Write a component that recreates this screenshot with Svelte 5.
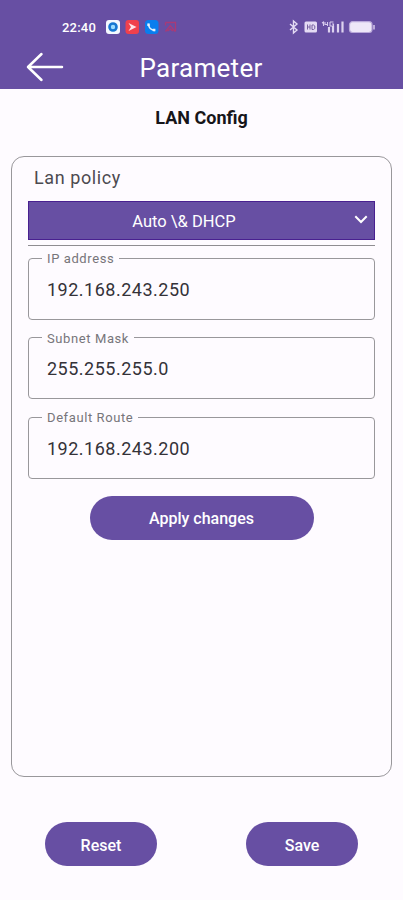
<script>
  let policy = $state('Auto \\& DHCP');
  let fields = $state([
    { label: 'IP address', value: '192.168.243.250' },
    { label: 'Subnet Mask', value: '255.255.255.0' },
    { label: 'Default Route', value: '192.168.243.200' },
  ]);
</script>

<div class="screen">
  <header>
    <div class="status">
      <span class="time">22:40</span>
      <svg class="apps" width="74" height="16" viewBox="0 0 74 16">
        <rect x="1" y="1" width="14" height="14" rx="3" fill="#f4f8ff" />
        <circle cx="8" cy="8" r="3.5" fill="#9bdcff" stroke="#1676d2" stroke-width="2.6" />
        <rect x="20.5" y="1" width="13.5" height="14" rx="3" fill="#f0404c" />
        <path d="M23.5 4l8 4-8 4 2.5-4z" fill="#ffe3e8" />
        <rect x="40" y="1" width="13.5" height="14" rx="3.5" fill="#087eee" />
        <path d="M43.6 4.8c-.1 3.6 2.5 6.4 6.3 6.6" fill="none" stroke="#e4f3ff" stroke-width="1.5" />
        <path d="M43.5 4.5v2.4M47.8 11h2.6" stroke="#e4f3ff" stroke-width="2.4" />
        <path d="M60.5 3.500h10v9M60.500 12.500l4.700-6 5 6M60.500 3.500v3M62.500 12l2.700-2 2.700 2" fill="none" stroke="#a93a76" stroke-width="1.3" />
      </svg>
      <svg class="system" width="88" height="16" viewBox="0 0 88 16">
        <path d="M2 5l7 6-3.5 3V2L9 5l-7 6" fill="none" stroke="#e4dbf4" stroke-width="1.4" />
        <rect x="16.5" y="2.5" width="12.5" height="11" rx="1.5" fill="#e4dbf4" />
        <path d="M19.5 5.5v5M19.5 8H22M22 5.5v5M24 6h1.5l1.3 1v2.5l-1.3 1H24z" fill="none" stroke="#76619f" />
        <path d="M34 4l1.5-1v4M37 3v2.5h3M39.5 3v4M42 3h3.5M42 3v4h3.5V5H44" fill="none" stroke="#d7caed" stroke-width="1.1" />
        <path d="M41 8v5.5M45 7v6.5M50 5v8.5M54.5 2.5v11" stroke="#ddd2ef" stroke-width="2.2" />
        <rect x="61.5" y="2.7" width="22.5" height="10.8" rx="3" fill="#eee7f8" stroke="#b9a8d9" stroke-width="1.2" />
        <path d="M86 6v4.5" stroke="#d7caed" stroke-width="1.5" />
      </svg>
    </div>
    <div class="toolbar">
      <button class="back" type="button" aria-label="Back">
        <svg width="38" height="30" viewBox="0 0 38 30">
          <path d="M36 15H2M15.5 2L2 15l13.5 13" fill="none" stroke="#fff" stroke-width="2.5" stroke-linecap="round" stroke-linejoin="round" />
        </svg>
      </button>
      <h1>Parameter</h1>
    </div>
  </header>

  <h2>LAN Config</h2>

  <main>
    <p>Lan policy</p>
    <button class="select" type="button">
      <span>{policy}</span>
      <svg width="14" height="9" viewBox="0 0 14 9">
        <path d="M1.3 1.3L7 7l5.7-5.7" fill="none" stroke="#fff" stroke-width="2" />
      </svg>
    </button>
    <hr />
    {#each fields as field (field.label)}
      <fieldset>
        <legend>{field.label}</legend>
        <input aria-label={field.label} bind:value={field.value} />
      </fieldset>
    {/each}
    <button class="pill apply" type="button">Apply changes</button>
  </main>

  <footer>
    <button class="pill" type="button">Reset</button>
    <button class="pill" type="button">Save</button>
  </footer>
</div>

<style>
  :global(body) {
    margin: 0;
    background: #fefbff;
  }
  .screen {
    box-sizing: border-box;
    display: flex;
    flex-direction: column;
    width: 403px;
    height: 900px;
    background: #fefbff;
    font-family: Roboto, sans-serif;
  }
  button {
    border: none;
    padding: 0;
    font: inherit;
    color: #fff;
    cursor: pointer;
  }
  header {
    height: 88.5px;
    flex: none;
    background: #674fa3;
    color: #fff;
  }
  .status {
    display: flex;
    align-items: center;
    height: 16px;
    padding: 19px 27px 0 62px;
  }
  .time {
    width: 43px;
    font-size: 13px;
    font-weight: 500;
    letter-spacing: 0.2px;
  }
  .system {
    margin-left: auto;
  }
  .toolbar {
    display: grid;
    grid-template-columns: 1fr auto 1fr;
    align-items: start;
    height: 30px;
    padding: 17px 27px 0 26px;
  }
  .back {
    display: flex;
    background: none;
  }
  h1 {
    margin: 1px 0 0;
    font-size: 26px;
    font-weight: 400;
    line-height: 30px;
    letter-spacing: 0.3px;
  }
  h2 {
    margin: 18px 0 0;
    font-size: 18px;
    font-weight: 700;
    line-height: 22px;
    text-align: center;
    color: #161519;
  }
  main {
    box-sizing: border-box;
    display: flex;
    flex-direction: column;
    height: 621px;
    margin: 27.5px 11px 0;
    padding: 10px 16px 0;
    border: 1px solid #99979b;
    border-radius: 13px;
  }
  p {
    margin: 0 0 13px 6px;
    font-size: 18px;
    line-height: 21px;
    letter-spacing: 0.6px;
    color: #4c4a50;
  }
  .select {
    box-sizing: border-box;
    display: grid;
    grid-template-columns: 1fr auto 1fr;
    align-items: center;
    height: 39px;
    padding: 0 6px;
    border: 1px solid #492090;
    background: #674fa3;
    font-size: 16.5px;
  }
  .select span {
    grid-column: 2;
    margin: 2px 0 0 -35px;
  }
  .select svg {
    justify-self: end;
    margin-top: -2px;
  }
  hr {
    width: 100%;
    height: 1px;
    margin: 5px 0 4px;
    border: none;
    background: #8f8d91;
  }
  fieldset {
    box-sizing: border-box;
    height: 69.5px;
    margin: 0 0 10px;
    padding: 0;
    border: 1px solid #99979b;
    border-radius: 4px;
  }
  legend {
    margin-left: 13px;
    padding: 1px 5px 0;
    font-size: 13px;
    line-height: 15px;
    letter-spacing: 0.6px;
    color: #77757a;
  }
  input {
    display: block;
    width: 100%;
    height: 22px;
    box-sizing: border-box;
    margin-top: 12px;
    padding: 0 18px;
    border: none;
    outline: none;
    background: none;
    font: 400 18px Roboto, sans-serif;
    letter-spacing: 0.5px;
    color: #343238;
  }
  .pill {
    width: 112px;
    height: 44px;
    padding-top: 2px;
    border-radius: 22px;
    background: #674fa3;
    font-size: 16px;
    font-weight: 500;
  }
  .apply {
    align-self: center;
    width: 224px;
    margin-top: 7px;
  }
  footer {
    display: flex;
    justify-content: space-between;
    padding: 45px 45px 0;
  }
</style>
